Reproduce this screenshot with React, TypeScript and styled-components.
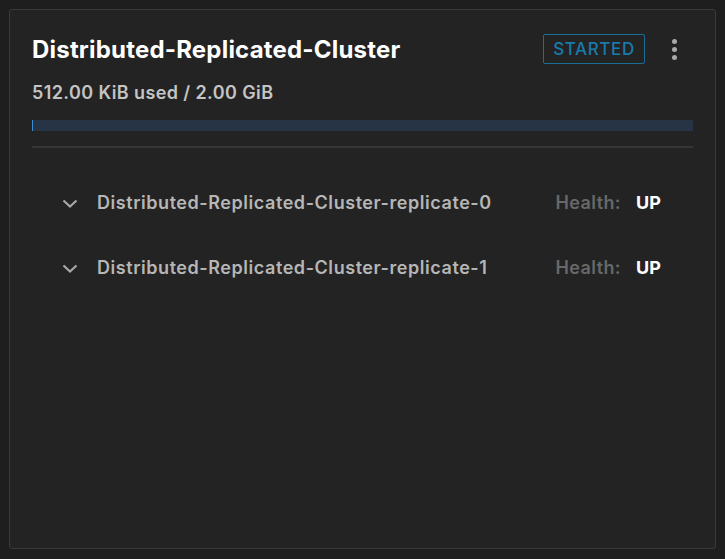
import React from "react";
import styled, { createGlobalStyle } from "styled-components";

const Global = createGlobalStyle`
  html, body { margin: 0; padding: 0; background: #1e1e1e; }
  body { font-family: Inter, "Open Sans", "Liberation Sans", sans-serif; }
`;

const Page = styled.div`
  padding: 9px;
  height: 559px;
  box-sizing: border-box;
`;

const Card = styled.div`
  width: 707px;
  height: 540px;
  box-sizing: border-box;
  background: #232323;
  border: 1px solid #3a3a3a;
  border-radius: 3px;
  padding: 22px 22px 0 22px;
  display: flex;
  flex-direction: column;
`;

const Header = styled.div`
  display: flex;
  align-items: center;
  height: 34px;
`;

const Title = styled.h1`
  margin: 0;
  flex: 1;
  font-size: 24px;
  font-weight: 700;
  letter-spacing: 0.2px;
  color: #ffffff;
`;

const Badge = styled.span`
  border: 1px solid #1b6d96;
  border-radius: 2px;
  color: #1a7aab;
  font-size: 17px;
  font-weight: 500;
  letter-spacing: 0.6px;
  height: 30px;
  width: 102px;
  box-sizing: border-box;
  display: flex;
  align-items: center;
  justify-content: center;
`;

const Kebab = styled.button`
  background: none;
  border: none;
  padding: 0;
  margin-left: 24px;
  margin-right: 14px;
  width: 10px;
  display: flex;
  flex-direction: column;
  align-items: center;
  gap: 3px;
  cursor: pointer;
`;

const Dot = styled.span`
  width: 5px;
  height: 5px;
  border-radius: 50%;
  background: #a8a8a8;
`;

const Usage = styled.div`
  margin-top: 16px;
  font-size: 18px;
  font-weight: 600;
  letter-spacing: 0.4px;
  color: #c4c4c4;
`;

const Bar = styled.div`
  margin-top: 17px;
  height: 11px;
  background: #263445;
  display: flex;
`;

const Fill = styled.div`
  background: #3a8fd8;
  height: 100%;
`;

const Divider = styled.div`
  margin-top: 15px;
  height: 2px;
  background: #363636;
`;

const List = styled.div`
  display: flex;
  flex-direction: column;
  padding: 43px 32px 0 29px;
  gap: 43px;
`;

const Row = styled.div`
  display: flex;
  align-items: center;
  height: 22px;
`;

const Chevron = styled.svg`
  width: 18px;
  height: 18px;
  margin-right: 18px;
  margin-top: 3px;
  flex: none;
`;

const Name = styled.span`
  flex: 1;
  font-size: 18px;
  font-weight: 600;
  letter-spacing: 0.55px;
  color: #b6b6b6;
`;

const HealthLabel = styled.span`
  font-size: 18px;
  font-weight: 600;
  letter-spacing: 0.4px;
  color: #686868;
  margin-right: 15px;
`;

const HealthValue = styled.span`
  font-size: 18px;
  font-weight: 700;
  color: #ffffff;
  width: 25px;
`;

const replicas = [
  "Distributed-Replicated-Cluster-replicate-0",
  "Distributed-Replicated-Cluster-replicate-1",
];

export default function App() {
  return (
    <Page>
      <Global />
      <Card>
        <Header>
          <Title>Distributed-Replicated-Cluster</Title>
          <Badge>STARTED</Badge>
          <Kebab aria-label="menu">
            <Dot />
            <Dot />
            <Dot />
          </Kebab>
        </Header>
        <Usage>512.00 KiB used / 2.00 GiB</Usage>
        <Bar>
          <Fill style={{ width: `${Math.max(1, 0.00024 * 661)}px` }} />
        </Bar>
        <Divider />
        <List>
          {replicas.map((r) => (
            <Row key={r}>
              <Chevron viewBox="0 0 18 18">
                <path d="M2.5 5.5 L9 11.5 L15.5 5.5" fill="none" stroke="#a8a8a8" strokeWidth="2.2" />
              </Chevron>
              <Name>{r}</Name>
              <HealthLabel>Health:</HealthLabel>
              <HealthValue>UP</HealthValue>
            </Row>
          ))}
        </List>
      </Card>
    </Page>
  );
}
